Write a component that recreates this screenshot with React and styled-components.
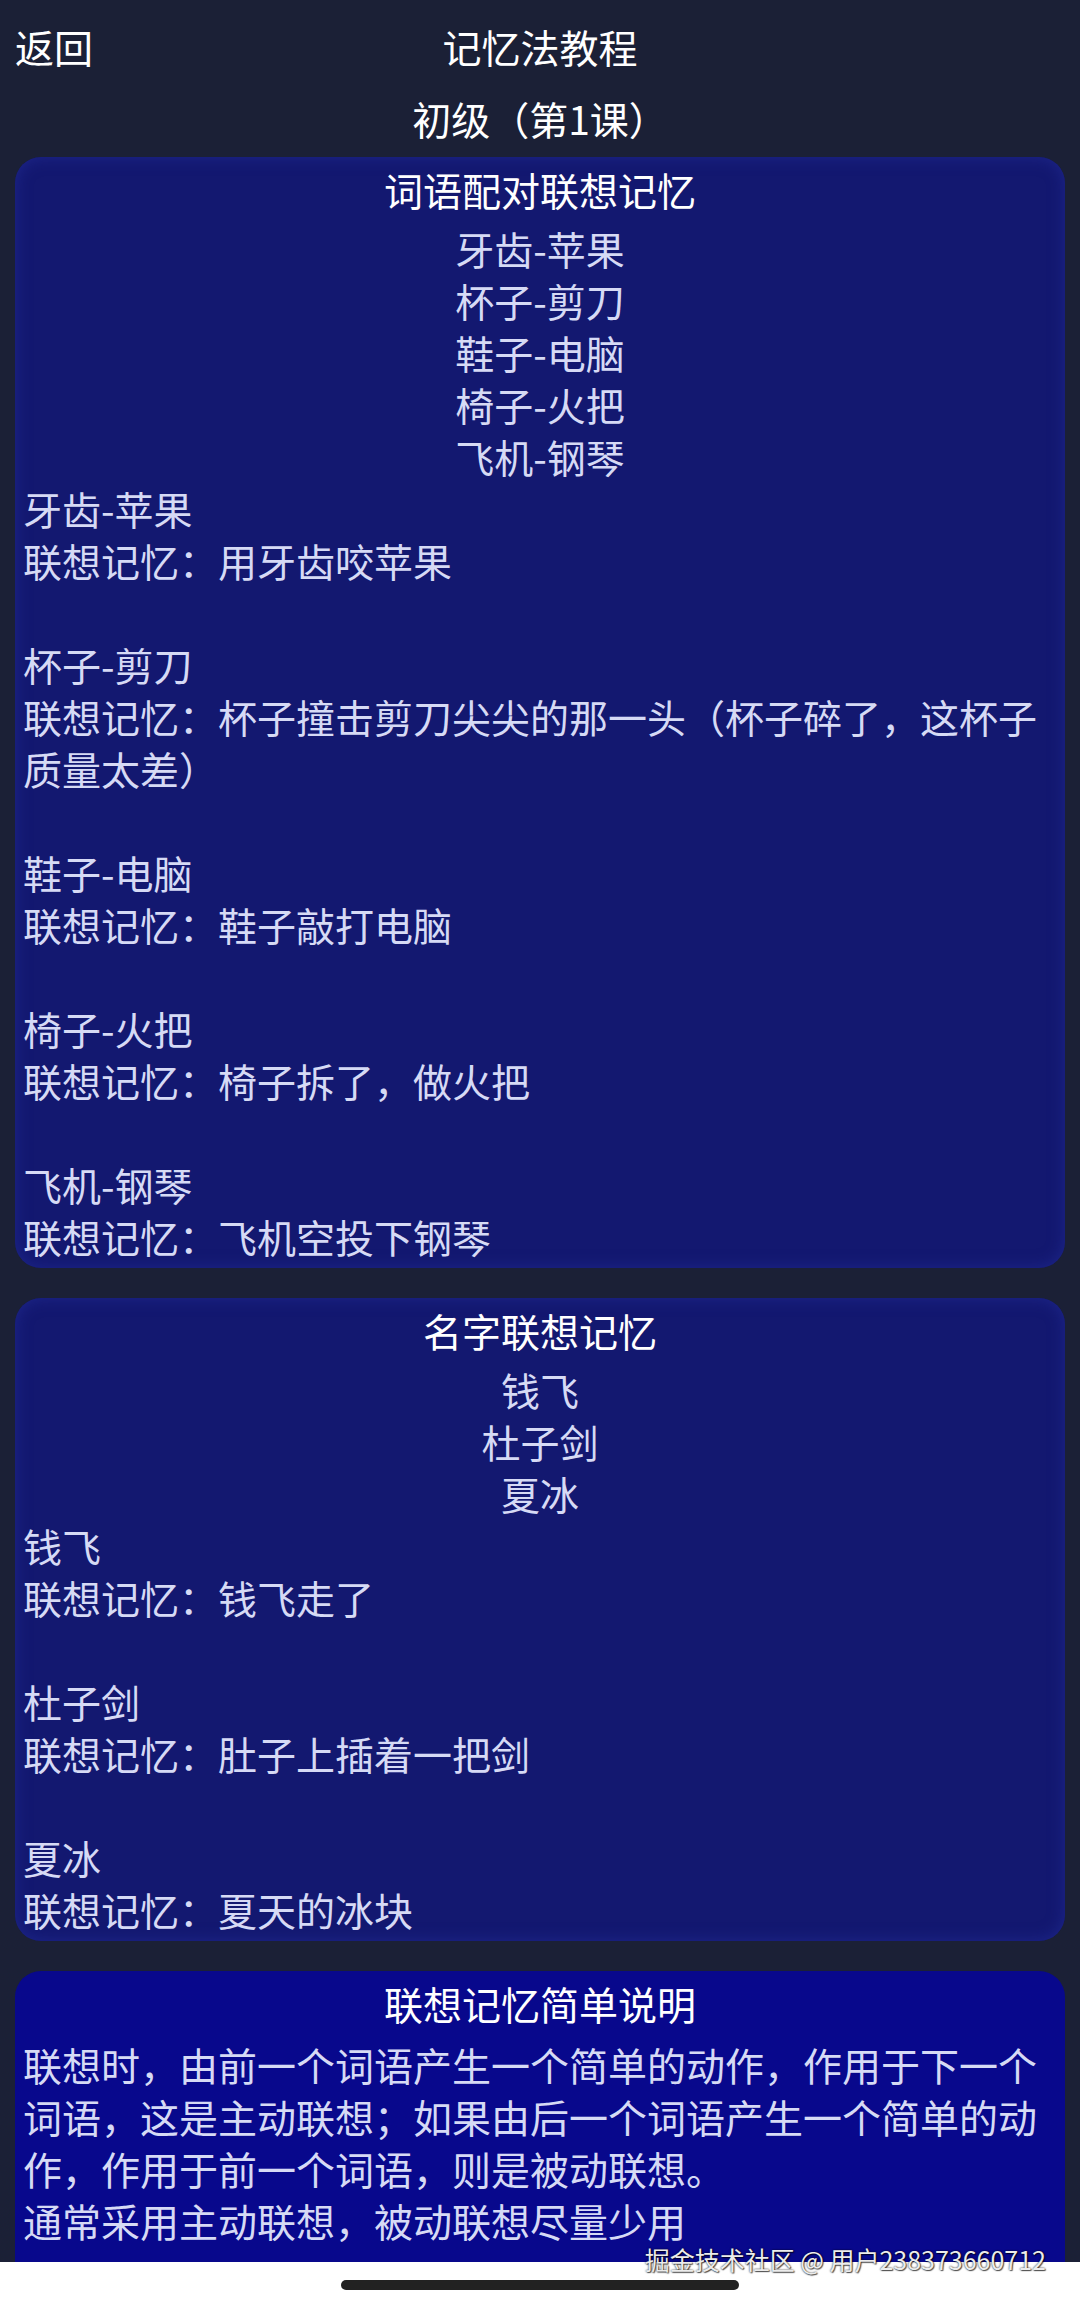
import styled, { createGlobalStyle } from 'styled-components';

const GlobalStyle = createGlobalStyle`
  html, body {
    margin: 0;
    padding: 0;
    background: #1b2036;
  }

  body {
    font-family: "Noto Sans CJK SC", "Noto Sans", sans-serif;
  }
`;

const Screen = styled.div`
  position: relative;
  width: 1080px;
  height: 2307px;
  overflow: hidden;
  background: #1b2036;
  color: #fff;
  display: flex;
  flex-direction: column;
`;

const Header = styled.header`
  display: grid;
  grid-template-columns: 1fr auto 1fr;
  align-items: center;
  height: 92px;
  padding: 0 15px;
  font-size: 39px;
  line-height: 52px;
`;

const BackButton = styled.span`
  justify-self: start;
  cursor: pointer;
`;

const PageTitle = styled.h1`
  margin: 0;
  font-size: 39px;
  font-weight: 400;
`;

const Level = styled.h2`
  margin: 0 0 13px;
  text-align: center;
  font-size: 39px;
  font-weight: 400;
  line-height: 52px;
`;

const Content = styled.main`
  display: flex;
  flex-direction: column;
  gap: 30px;
  padding: 0 15px;
`;

const Card = styled.section`
  border-radius: 26px;
  padding: 6px 8px ${({ $tail }) => ($tail ? '60px' : '6px')};
  background: ${({ $bright }) => ($bright ? '#08088c' : '#131870')};
  box-shadow: ${({ $bright }) =>
    $bright ? 'none' : 'inset 0 0 16px rgba(34, 44, 150, 0.7)'};
  font-size: 39px;
  line-height: 52px;
  color: #d6daf5;
`;

const CardTitle = styled.h3`
  margin: 0 0 ${({ $gap }) => $gap}px;
  text-align: center;
  font-size: 39px;
  font-weight: 400;
  line-height: 52px;
  color: #fff;
`;

const CenterList = styled.div`
  display: flex;
  flex-direction: column;
  align-items: center;
`;

const Line = styled.div`
  min-height: 52px;
`;

const Entry = styled.div`
  & + & {
    margin-top: 52px;
  }
`;

const Paragraph = styled.p`
  margin: 0;
`;

const Watermark = styled.div`
  position: absolute;
  right: 34px;
  top: 2245px;
  font-size: 25px;
  line-height: 28px;
  color: #ececec;
  text-shadow: 0 0 2px rgba(0, 0, 0, 0.9), 1px 1px 1px rgba(0, 0, 0, 0.6);
  z-index: 2;
`;

const HomeBar = styled.div`
  position: absolute;
  left: 0;
  right: 0;
  bottom: 0;
  height: 45px;
  background: #fff;
  display: flex;
  justify-content: center;
  padding-top: 18px;
  box-sizing: border-box;
  z-index: 1;
`;

const HomeIndicator = styled.div`
  width: 398px;
  height: 10px;
  border-radius: 5px;
  background: #222;
`;

const wordPairs = [
  { pair: '牙齿-苹果', memo: ['联想记忆：用牙齿咬苹果'] },
  { pair: '杯子-剪刀', memo: ['联想记忆：杯子撞击剪刀尖尖的那一头（杯子碎了，这杯子', '质量太差）'] },
  { pair: '鞋子-电脑', memo: ['联想记忆：鞋子敲打电脑'] },
  { pair: '椅子-火把', memo: ['联想记忆：椅子拆了，做火把'] },
  { pair: '飞机-钢琴', memo: ['联想记忆：飞机空投下钢琴'] },
];

const names = [
  { pair: '钱飞', memo: ['联想记忆：钱飞走了'] },
  { pair: '杜子剑', memo: ['联想记忆：肚子上插着一把剑'] },
  { pair: '夏冰', memo: ['联想记忆：夏天的冰块'] },
];

function MemoCard ({ title, items }) {
  return (
    <Card>
      <CardTitle $gap={7}>{title}</CardTitle>
      <CenterList>
        {items.map((item) => (
          <Line key={item.pair}>{item.pair}</Line>
        ))}
      </CenterList>
      {items.map((item) => (
        <Entry key={item.pair}>
          <Line>{item.pair}</Line>
          {item.memo.map((text) => (
            <Line key={text}>{text}</Line>
          ))}
        </Entry>
      ))}
    </Card>
  );
}

export default function App () {
  return (
    <Screen>
      <GlobalStyle />
      <Header>
        <BackButton>返回</BackButton>
        <PageTitle>记忆法教程</PageTitle>
        <span />
      </Header>
      <Level>初级（第1课）</Level>
      <Content>
        <MemoCard title="词语配对联想记忆" items={wordPairs} />
        <MemoCard title="名字联想记忆" items={names} />
        <Card $bright $tail>
          <CardTitle $gap={9}>联想记忆简单说明</CardTitle>
          <Paragraph>
            联想时，由前一个词语产生一个简单的动作，作用于下一个词语，这是主动联想；如果由后一个词语产生一个简单的动作，作用于前一个词语，则是被动联想。
          </Paragraph>
          <Paragraph>通常采用主动联想，被动联想尽量少用</Paragraph>
        </Card>
      </Content>
      <Watermark>掘金技术社区 @ 用户238373660712</Watermark>
      <HomeBar>
        <HomeIndicator />
      </HomeBar>
    </Screen>
  );
}
